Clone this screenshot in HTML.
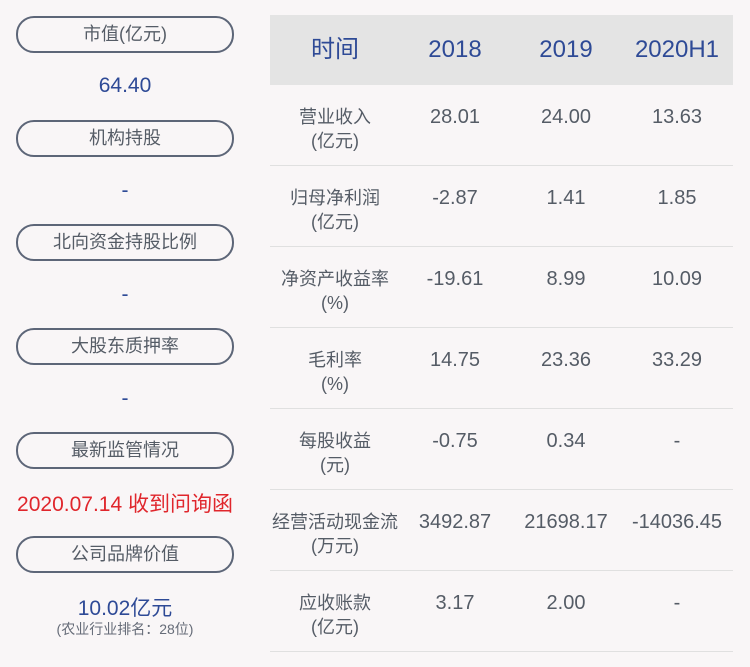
<!DOCTYPE html><html><head><meta charset="utf-8"><style>
body{margin:0;width:750px;height:667px;background:#f9f6f7;font-family:"Liberation Sans","Noto Sans CJK SC",sans-serif;position:relative;overflow:hidden}
.p{position:absolute;left:16px;width:214px;height:33px;border:2px solid #5d6678;border-radius:18px;text-align:center;line-height:33px;font-size:18px;color:#555c66}
.v{position:absolute;left:16px;width:218px;text-align:center;font-size:21px;color:#2e4a96}
.hd{position:absolute;left:270px;top:15px;width:463px;height:70px;background:#e4e4e4}
.h{position:absolute;top:15px;line-height:70px;font-size:24px;color:#2e4a96;text-align:center;width:110px}
.ln{position:absolute;left:270px;width:463px;height:1px;background:#e0e0e0}
.l{position:absolute;left:270px;width:130px;text-align:center;font-size:18px;color:#555c66;line-height:24px}
.c{position:absolute;width:130px;text-align:center;font-size:20px;color:#555c66}
</style></head><body>
<div class="p" style="top:16px">市值(亿元)</div><div class="v" style="top:74px">64.40</div>
<div class="p" style="top:120px">机构持股</div><div class="v" style="top:179px">-</div>
<div class="p" style="top:224px">北向资金持股比例</div><div class="v" style="top:283px">-</div>
<div class="p" style="top:328px">大股东质押率</div><div class="v" style="top:387px">-</div>
<div class="p" style="top:432px">最新监管情况</div><div class="v" style="top:488px;color:#e0262c;left:0;width:250px;font-size:21px">2020.07.14 收到问询函</div>
<div class="p" style="top:536px">公司品牌价值</div><div class="v" style="top:592px">10.02亿元</div>
<div class="v" style="top:619px;font-size:14px;color:#666c78">(农业行业排名：28位)</div>
<div class="hd"></div>
<div class="h" style="left:280px">时间</div><div class="h" style="left:400px">2018</div><div class="h" style="left:511px">2019</div><div class="h" style="left:622px">2020H1</div>
<div class="ln" style="top:165px"></div><div class="ln" style="top:246px"></div><div class="ln" style="top:327px"></div><div class="ln" style="top:408px"></div><div class="ln" style="top:489px"></div><div class="ln" style="top:570px"></div><div class="ln" style="top:651px"></div>
<div class="l" style="top:105px">营业收入<br>(亿元)</div>
<div class="c" style="left:390px;top:106px">28.01</div><div class="c" style="left:501px;top:106px">24.00</div><div class="c" style="left:612px;top:106px">13.63</div>
<div class="l" style="top:186px">归母净利润<br>(亿元)</div>
<div class="c" style="left:390px;top:187px">-2.87</div><div class="c" style="left:501px;top:187px">1.41</div><div class="c" style="left:612px;top:187px">1.85</div>
<div class="l" style="top:267px">净资产收益率<br>(%)</div>
<div class="c" style="left:390px;top:268px">-19.61</div><div class="c" style="left:501px;top:268px">8.99</div><div class="c" style="left:612px;top:268px">10.09</div>
<div class="l" style="top:348px">毛利率<br>(%)</div>
<div class="c" style="left:390px;top:349px">14.75</div><div class="c" style="left:501px;top:349px">23.36</div><div class="c" style="left:612px;top:349px">33.29</div>
<div class="l" style="top:429px">每股收益<br>(元)</div>
<div class="c" style="left:390px;top:430px">-0.75</div><div class="c" style="left:501px;top:430px">0.34</div><div class="c" style="left:612px;top:430px">-</div>
<div class="l" style="top:510px">经营活动现金流<br>(万元)</div>
<div class="c" style="left:390px;top:511px">3492.87</div><div class="c" style="left:501px;top:511px">21698.17</div><div class="c" style="left:612px;top:511px">-14036.45</div>
<div class="l" style="top:591px">应收账款<br>(亿元)</div>
<div class="c" style="left:390px;top:592px">3.17</div><div class="c" style="left:501px;top:592px">2.00</div><div class="c" style="left:612px;top:592px">-</div>
</body></html>
